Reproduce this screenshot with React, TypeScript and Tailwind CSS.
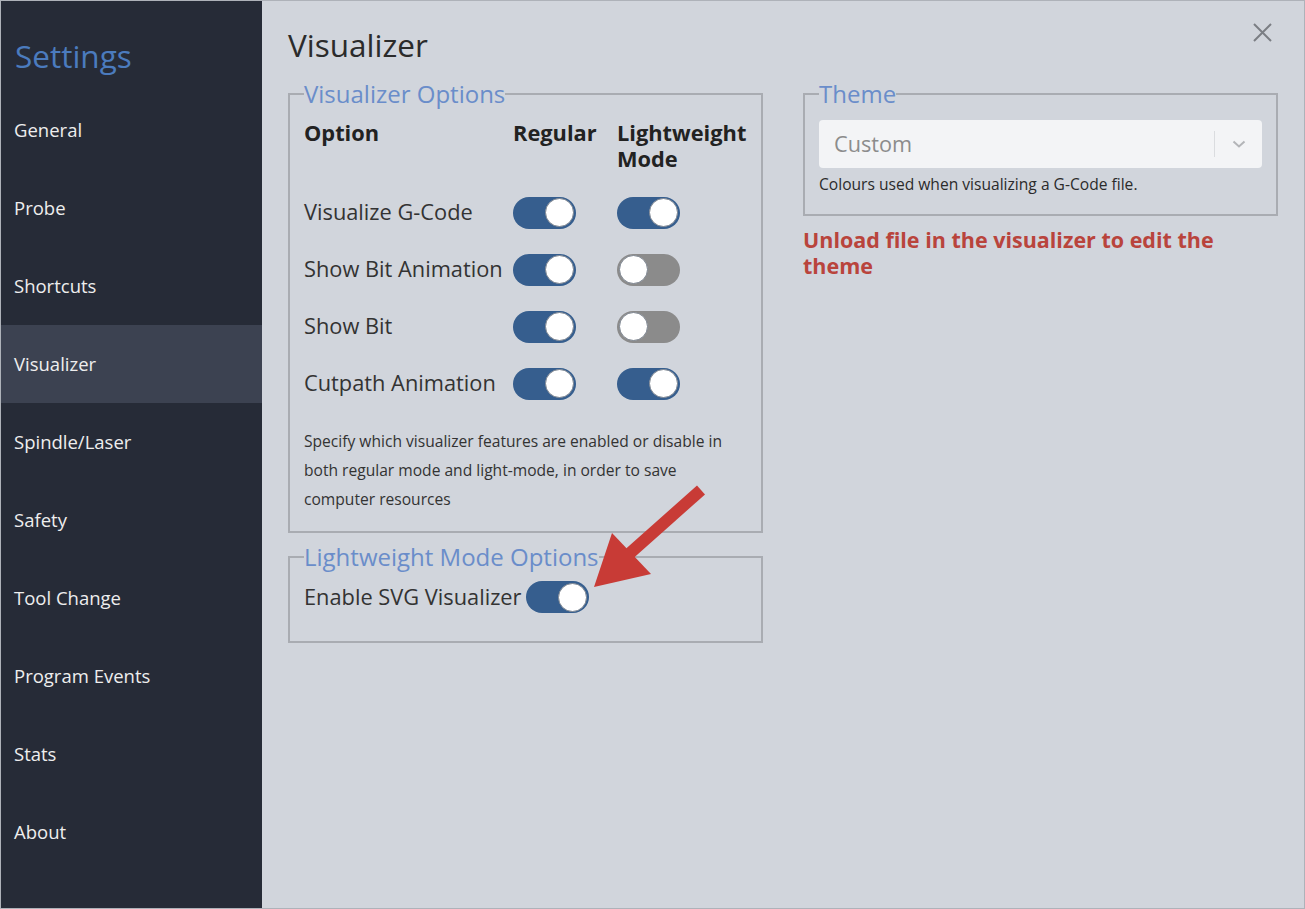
import React from "react";

const MENU = [
  "General",
  "Probe",
  "Shortcuts",
  "Visualizer",
  "Spindle/Laser",
  "Safety",
  "Tool Change",
  "Program Events",
  "Stats",
  "About",
];

const OPTIONS: { label: string; regular: boolean; light: boolean }[] = [
  { label: "Visualize G-Code", regular: true, light: true },
  { label: "Show Bit Animation", regular: true, light: false },
  { label: "Show Bit", regular: true, light: false },
  { label: "Cutpath Animation", regular: true, light: true },
];

const Toggle: React.FC<{ on: boolean }> = ({ on }) => (
  <div
    className={`w-[63px] h-[32px] rounded-full flex items-center px-[2px] shrink-0 ${
      on ? "bg-[#365e8e] justify-end" : "bg-[#8b8b8b] justify-start"
    }`}
  >
    <div className="w-[29px] h-[29px] rounded-full bg-white border border-[#7d8590]" />
  </div>
);

const Legend: React.FC<{ children: React.ReactNode }> = ({ children }) => (
  <legend className="text-[24px] leading-[32px] text-[#6a8dca] px-0">{children}</legend>
);

export default function App() {
  return (
    <div className="w-[1305px] h-[909px] flex relative border border-[#aeb2b9] font-['Open_Sans',sans-serif] overflow-hidden">
      <aside className="w-[261px] bg-[#262b37] flex flex-col shrink-0">
        <div className="h-[90px] flex items-center pl-[14px]">
          <h1 className="text-[31.5px] text-[#4b7bbe] mt-[20px]">Settings</h1>
        </div>
        {MENU.map((item) => (
          <div
            key={item}
            className={`h-[78px] flex items-center pl-[13px] text-[18.5px] text-[#eeeeee] ${
              item === "Visualizer" ? "bg-[#3c4251]" : ""
            }`}
          >
            {item}
          </div>
        ))}
      </aside>

      <main className="flex-1 bg-[#d1d5dc] pl-[26px] pt-[23px]">
        <h2 className="text-[31.5px] leading-[42px] text-[#2b2b2b]">Visualizer</h2>

        <div className="flex gap-[40px] mt-[12px]">
          <div className="w-[475px] flex flex-col">
            <fieldset className="border-2 border-[#a9acb2] px-[14px] pb-[17px]">
              <Legend>Visualizer Options</Legend>
              <div className="grid grid-cols-[209px_104px_1fr] mt-[10px] text-[21.8px] leading-[26px] font-bold text-[#222222]">
                <div>Option</div>
                <div>Regular</div>
                <div className="flex flex-col">
                  <span className="leading-[26px]">Lightweight</span>
                  <span className="leading-[26px]">Mode</span>
                </div>
              </div>
              <div className="mt-[12px]">
                {OPTIONS.map((o) => (
                  <div
                    key={o.label}
                    className="grid grid-cols-[209px_104px_1fr] h-[57px] items-center text-[21.8px] text-[#333333]"
                  >
                    <div className="whitespace-nowrap">{o.label}</div>
                    <Toggle on={o.regular} />
                    <Toggle on={o.light} />
                  </div>
                ))}
              </div>
              <p className="mt-[15px] text-[15.6px] leading-[29px] text-[#333333] pr-[18px]">
                Specify which visualizer features are enabled or disable in both regular mode and
                light-mode, in order to save computer resources
              </p>
            </fieldset>

            <fieldset className="border-2 border-[#a9acb2] px-[14px] pb-[28px] mt-[8px]">
              <Legend>Lightweight Mode Options</Legend>
              <div className="flex items-center gap-[4px] mt-[8px] text-[21.8px] leading-[30px] text-[#333333]">
                <span className="whitespace-nowrap">Enable SVG Visualizer</span>
                <Toggle on />
              </div>
            </fieldset>
          </div>

          <div className="w-[475px] flex flex-col">
            <fieldset className="border-2 border-[#a9acb2] px-[14px] pb-[20px]">
              <Legend>Theme</Legend>
              <div className="mt-[10px] h-[48px] bg-[#f3f4f6] rounded-[4px] flex items-center">
                <span className="flex-1 pl-[15px] text-[21.7px] text-[#8c8c8c]">Custom</span>
                <div className="w-px h-[26px] bg-[#dadcdf]" />
                <div className="w-[47px] flex items-center justify-center">
                  <svg width="14" height="8" viewBox="0 0 14 8" fill="none">
                    <path d="M1.5 1.5 7 6.5 12.5 1.5" stroke="#b3b5b8" strokeWidth="2" />
                  </svg>
                </div>
              </div>
              <p className="mt-[6px] text-[15.6px] leading-[20px] text-[#2b2b2b]">
                Colours used when visualizing a G-Code file.
              </p>
            </fieldset>
            <p className="mt-[11px] text-[21.5px] leading-[26px] font-bold text-[#b9443c]">
              Unload file in the visualizer to edit the theme
            </p>
          </div>
        </div>
      </main>

      <button className="absolute top-[21px] right-[31px] w-[21px] h-[21px]">
        <svg width="21" height="21" viewBox="0 0 21 21" fill="none">
          <path d="M2 2 19 19 M19 2 2 19" stroke="#7b7e84" strokeWidth="2" />
        </svg>
      </button>

      <svg className="absolute left-0 top-0 pointer-events-none" width="1305" height="909">
        <line x1="700" y1="489" x2="628" y2="553" stroke="#c83b36" strokeWidth="12" />
        <polygon points="593,586 611,532 650,573" fill="#c83b36" />
      </svg>
    </div>
  );
}
